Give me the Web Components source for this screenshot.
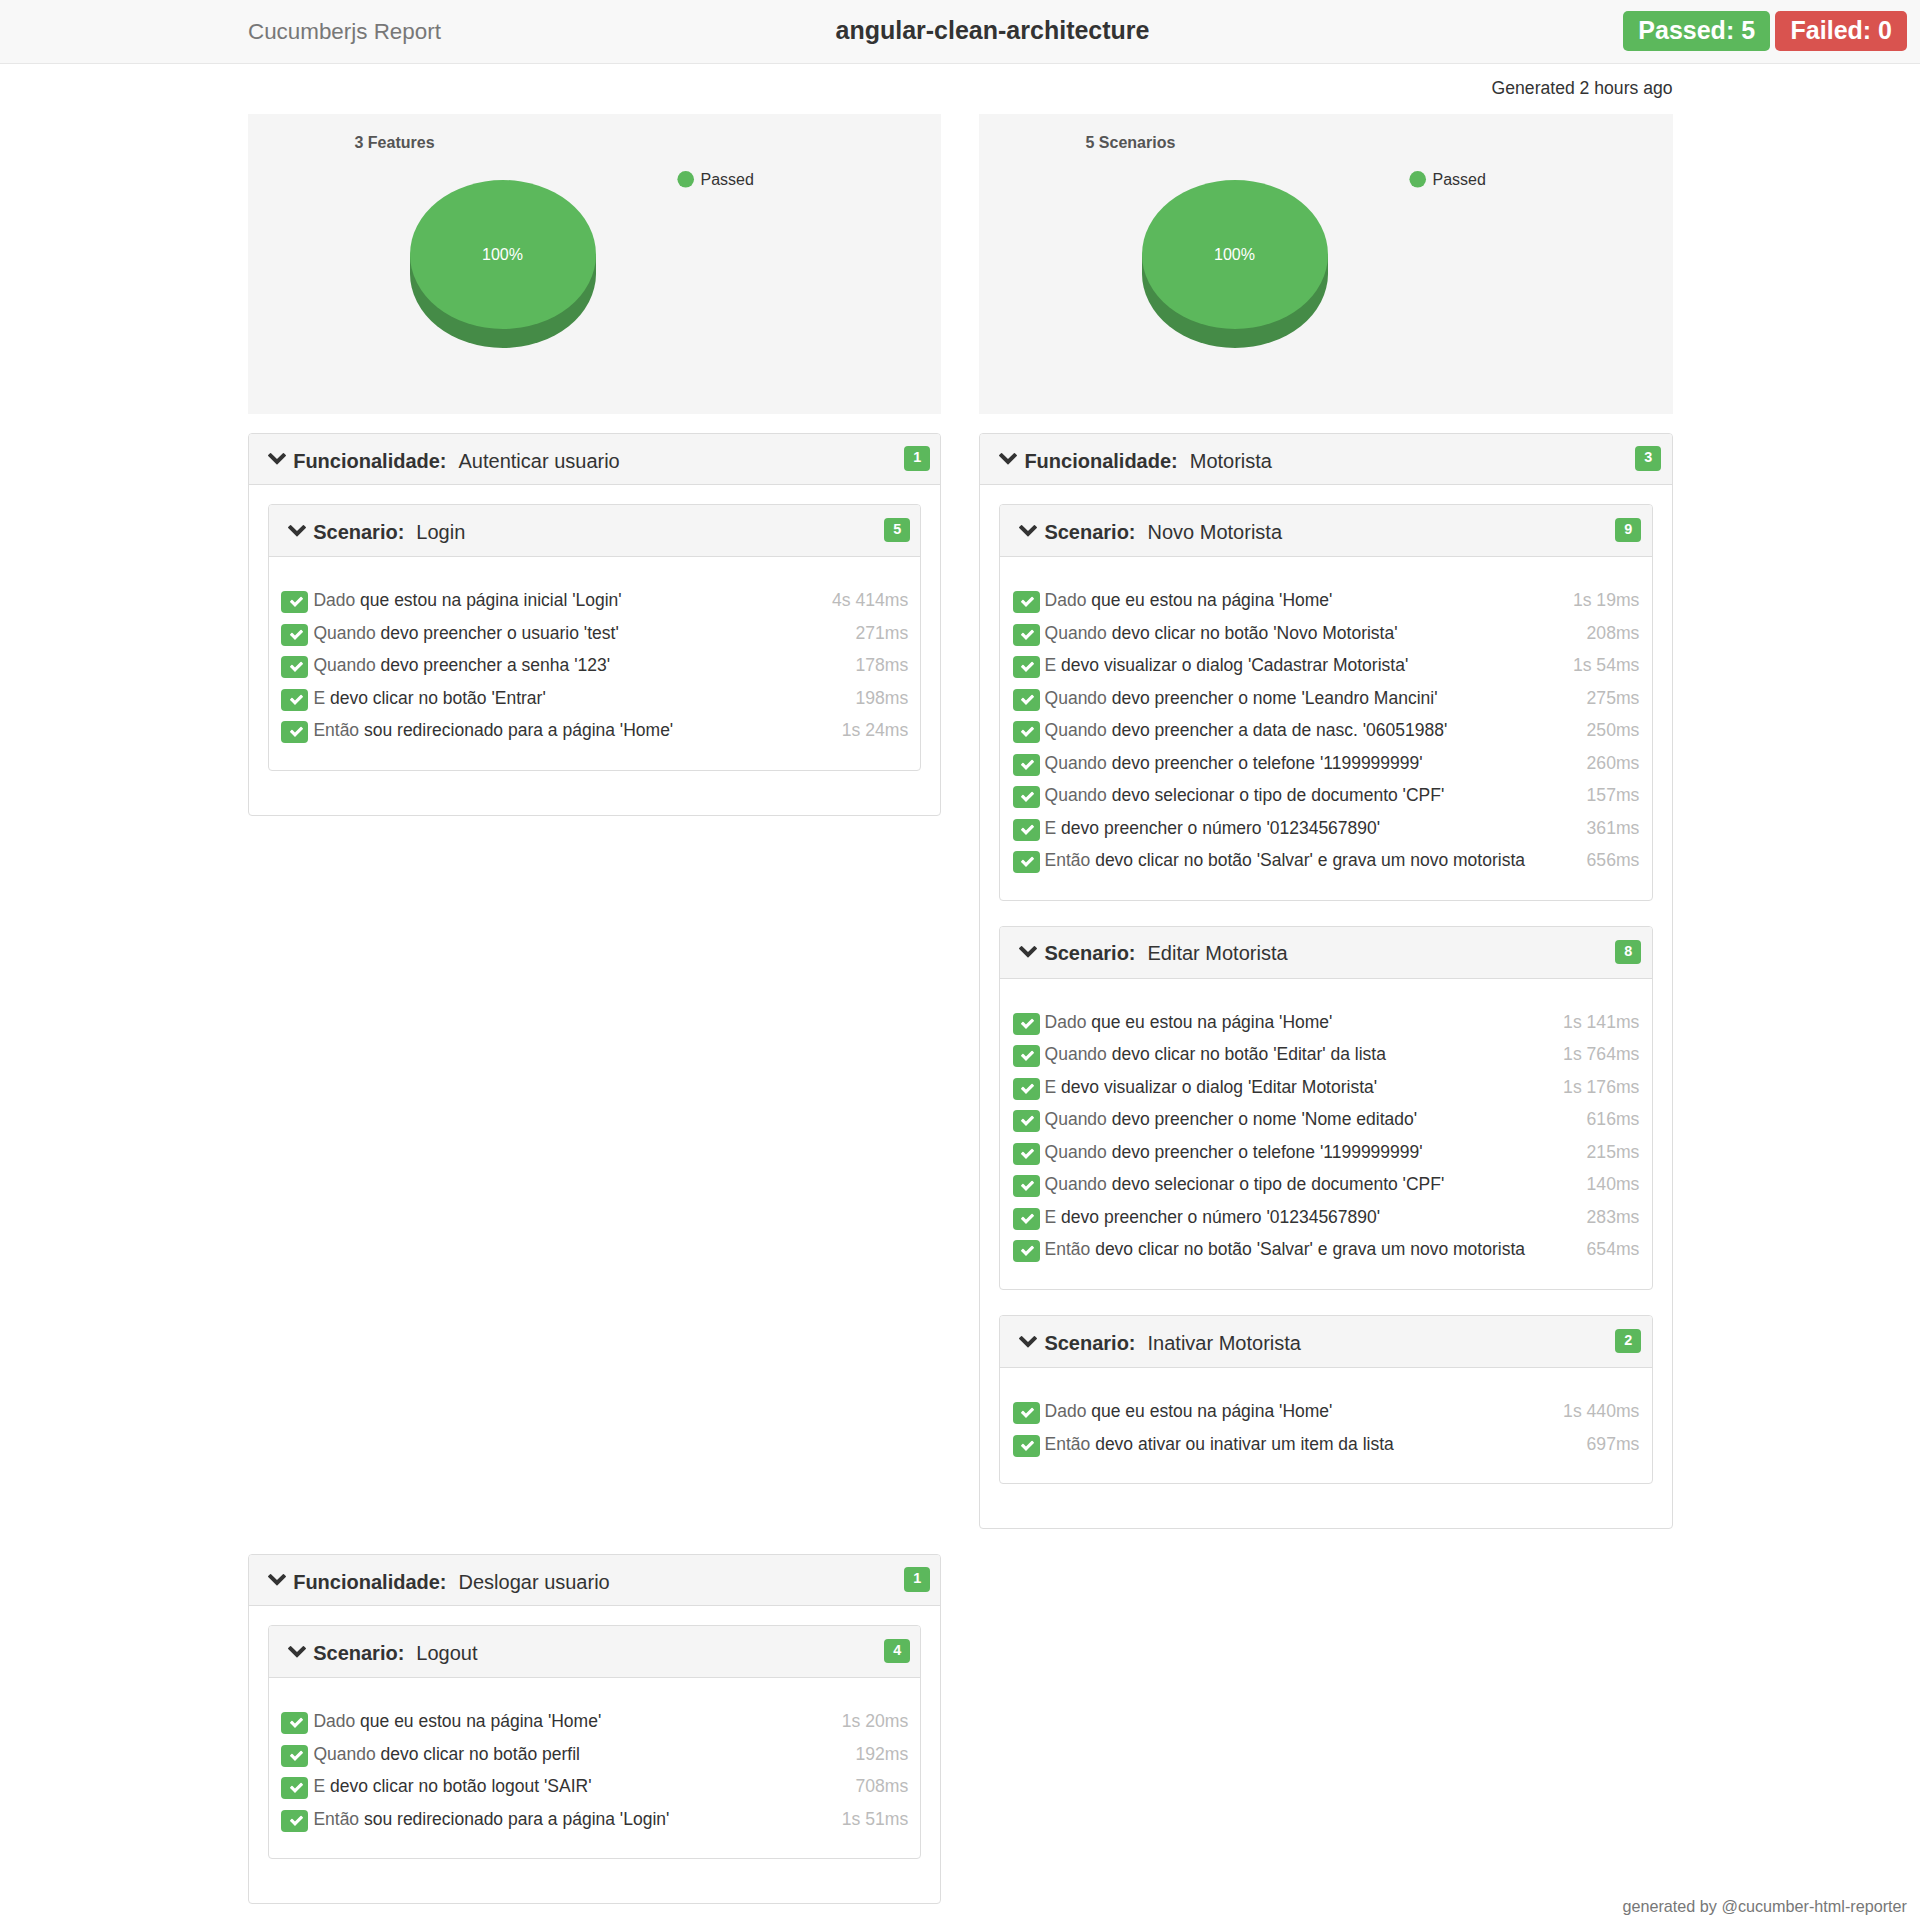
<!DOCTYPE html>
<html lang="pt">
<head>
<meta charset="utf-8">
<title>Cucumberjs Report</title>
<style>
    html, body { margin: 0; padding: 0; background: #fff; }
    body { font-family: "Liberation Sans", Arial, sans-serif; color: #333; position: relative; min-height: 1928px; }
    .page { width: 1424.4px; margin-left: 248.2px; display: grid; grid-template-columns: 693.2px 693.2px; column-gap: 38px; align-items: start; }
    .generated { grid-column: 1 / 3; height: 48px; padding-bottom: 2px; display: flex; justify-content: flex-end; align-items: center; font-size: 17.6px; }
    .charts { margin-bottom: 19px; }
    .feature { margin-bottom: 24.75px; }
</style>
</head>
<body>
<report-nav project="angular-clean-architecture" passed="5" failed="0"></report-nav>

<div class="page">
    <div class="generated">Generated 2 hours ago</div>
    <report-chart class="charts" label="3 Features"></report-chart>
    <report-chart class="charts" label="5 Scenarios" offset="1"></report-chart>

    <feature-panel class="feature" name="Autenticar usuario" count="1">
        <scenario-panel name="Login" count="5">
            <step-row key="Dado" text="que estou na página inicial 'Login'" time="4s 414ms"></step-row>
            <step-row key="Quando" text="devo preencher o usuario 'test'" time="271ms"></step-row>
            <step-row key="Quando" text="devo preencher a senha '123'" time="178ms"></step-row>
            <step-row key="E" text="devo clicar no botão 'Entrar'" time="198ms"></step-row>
            <step-row key="Então" text="sou redirecionado para a página 'Home'" time="1s 24ms"></step-row>
        </scenario-panel>
    </feature-panel>

    <feature-panel class="feature" name="Motorista" count="3">
        <scenario-panel name="Novo Motorista" count="9">
            <step-row key="Dado" text="que eu estou na página 'Home'" time="1s 19ms"></step-row>
            <step-row key="Quando" text="devo clicar no botão 'Novo Motorista'" time="208ms"></step-row>
            <step-row key="E" text="devo visualizar o dialog 'Cadastrar Motorista'" time="1s 54ms"></step-row>
            <step-row key="Quando" text="devo preencher o nome 'Leandro Mancini'" time="275ms"></step-row>
            <step-row key="Quando" text="devo preencher a data de nasc. '06051988'" time="250ms"></step-row>
            <step-row key="Quando" text="devo preencher o telefone '1199999999'" time="260ms"></step-row>
            <step-row key="Quando" text="devo selecionar o tipo de documento 'CPF'" time="157ms"></step-row>
            <step-row key="E" text="devo preencher o número '01234567890'" time="361ms"></step-row>
            <step-row key="Então" text="devo clicar no botão 'Salvar' e grava um novo motorista" time="656ms"></step-row>
        </scenario-panel>
        <scenario-panel name="Editar Motorista" count="8">
            <step-row key="Dado" text="que eu estou na página 'Home'" time="1s 141ms"></step-row>
            <step-row key="Quando" text="devo clicar no botão 'Editar' da lista" time="1s 764ms"></step-row>
            <step-row key="E" text="devo visualizar o dialog 'Editar Motorista'" time="1s 176ms"></step-row>
            <step-row key="Quando" text="devo preencher o nome 'Nome editado'" time="616ms"></step-row>
            <step-row key="Quando" text="devo preencher o telefone '1199999999'" time="215ms"></step-row>
            <step-row key="Quando" text="devo selecionar o tipo de documento 'CPF'" time="140ms"></step-row>
            <step-row key="E" text="devo preencher o número '01234567890'" time="283ms"></step-row>
            <step-row key="Então" text="devo clicar no botão 'Salvar' e grava um novo motorista" time="654ms"></step-row>
        </scenario-panel>
        <scenario-panel name="Inativar Motorista" count="2">
            <step-row key="Dado" text="que eu estou na página 'Home'" time="1s 440ms"></step-row>
            <step-row key="Então" text="devo ativar ou inativar um item da lista" time="697ms"></step-row>
        </scenario-panel>
    </feature-panel>

    <feature-panel class="feature" name="Deslogar usuario" count="1">
        <scenario-panel name="Logout" count="4">
            <step-row key="Dado" text="que eu estou na página 'Home'" time="1s 20ms"></step-row>
            <step-row key="Quando" text="devo clicar no botão perfil" time="192ms"></step-row>
            <step-row key="E" text="devo clicar no botão logout 'SAIR'" time="708ms"></step-row>
            <step-row key="Então" text="sou redirecionado para a página 'Login'" time="1s 51ms"></step-row>
        </scenario-panel>
    </feature-panel>
</div>

<report-footer>generated by @cucumber-html-reporter</report-footer>

<script>
const CHEVRON = 'M1683 808l-742 741q-19 19-45 19t-45-19l-742-741q-19-19-19-45.5t19-45.5l166-165q19-19 45-19t45 19l531 531 531-531q19-19 45-19t45 19l166 165q19 19 19 45.5t-19 45.5z';
const CHECK = 'M1671 566q0 40-28 68l-724 724-136 136q-28 28-68 28t-68-28l-136-136-362-362q-28-28-28-68t28-68l136-136q28-28 68-28t68 28l294 295 656-657q28-28 68-28t68 28l136 136q28 28 28 68z';

class ReportNav extends HTMLElement {
    connectedCallback() {
        let root = this.attachShadow({mode:'open'});
        root.innerHTML = `
            <style>
                :host { display: block; height: 63px; background: #f8f8f8; border-bottom: 1px solid #e7e7e7; }
                .bar { height: 63px; position: relative; display: flex; align-items: center; padding: 0 13px 0 248px; }
                .brand { font-size: 22.4px; color: #777; }
                .title { position: absolute; left: 0; right: 0; text-align: center; font-size: 25px; font-weight: bold; color: #333; padding-left: 65px; line-height: 63px; top: -1px; }
                .labels { margin-left: auto; display: flex; gap: 5px; position: relative; }
                .label { height: 40px; line-height: 39px; padding: 0 15px 0 15.5px; border-radius: 5px; color: #fff; font-size: 25px; font-weight: bold; margin-top: -1px; }
                .ok { background: #5cb85c; }
                .bad { background: #d9534f; }
            </style>
            <div class="bar">
                <span class="brand">Cucumberjs Report</span>
                <span class="title">${this.getAttribute('project')}</span>
                <div class="labels">
                    <span class="label ok">Passed: ${this.getAttribute('passed')}</span>
                    <span class="label bad">Failed: ${this.getAttribute('failed')}</span>
                </div>
            </div>`;
    }
}
customElements.define('report-nav', ReportNav);

class ReportChart extends HTMLElement {
    connectedCallback() {
        let root = this.attachShadow({mode:'open'});
        // the right chart sits one pixel further from its panel edge than the left one
        let off = Number(this.getAttribute('offset') || 0);
        root.innerHTML = `
            <style>
                :host { display: block; height: 300px; background: #f5f5f5; }
                svg { display: block; font-family: "Liberation Sans", Arial, sans-serif; }
            </style>
            <svg width="693" height="300" viewBox="0 0 693 300">
                <text x="106.5" y="34" font-size="16" font-weight="bold" fill="#555">${this.getAttribute('label')}</text>
                <g transform="translate(${off} 0)">
                    <path d="M162 140.500v19a93 74.500 0 0 0 186 0v-19z" fill="#458b47"/>
                    <ellipse cx="255" cy="140.500" rx="93" ry="74.500" fill="#5cb85c"/>
                    <text x="254.500" y="146" font-size="16" fill="#fff" text-anchor="middle">100%</text>
                    <circle cx="437.700" cy="65.300" r="8.300" fill="#5cb85c"/>
                    <text x="452.500" y="70.700" font-size="16" fill="#333">Passed</text>
                </g>
            </svg>`;
    }
}
customElements.define('report-chart', ReportChart);

class CountBadge extends HTMLElement {
    connectedCallback() {
        let root = this.attachShadow({mode:'open'});
        root.innerHTML = `
            <style>
                :host { display: block; width: 26px; height: var(--badge-height, 25px); background: #5cb85c; border-radius: 4px; color: #fff; font-size: 14.4px; font-weight: bold; text-align: center; line-height: 23px; }
            </style>
            <slot></slot>`;
    }
}
customElements.define('count-badge', CountBadge);

class FeaturePanel extends HTMLElement {
    connectedCallback() {
        let root = this.attachShadow({mode:'open'});
        root.innerHTML = `
            <style>
                :host { display: block; border: 1px solid #ddd; border-radius: 4px; background: #fff; }
                .head { height: 50px; background: #f5f5f5; border-bottom: 1px solid #ddd; border-radius: 3px 3px 0 0; display: flex; align-items: center; padding: 0 10.2px 0 18px; font-size: 20px; color: #333; }
                .head svg { width: 20px; height: 20px; margin-top: -4px; flex: none; }
                .head b { margin-left: 6px; padding-top: 4px; }
                .head span { margin-left: 12px; flex: 1; padding-top: 4px; }
                count-badge { margin-top: -1px; }
                .body { padding: 19px 19px 19px; }
            </style>
            <div class="head">
                <svg viewBox="0 0 1792 1792"><path fill="#333" d="${CHEVRON}"/></svg>
                <b>Funcionalidade:</b><span>${this.getAttribute('name')}</span>
                <count-badge>${this.getAttribute('count')}</count-badge>
            </div>
            <div class="body"><slot></slot></div>`;
    }
}
customElements.define('feature-panel', FeaturePanel);

class ScenarioPanel extends HTMLElement {
    connectedCallback() {
        let root = this.attachShadow({mode:'open'});
        root.innerHTML = `
            <style>
                :host { display: block; border: 1px solid #ddd; border-radius: 4px; background: #fff; margin-bottom: 25px; --badge-height: 24px; }
                .head { height: 51px; background: #f5f5f5; border-bottom: 1px solid #ddd; border-radius: 3px 3px 0 0; display: flex; align-items: center; padding: 0 10.2px 0 18px; font-size: 20px; color: #333; }
                .head svg { width: 20px; height: 20px; margin-top: -4px; flex: none; }
                .head b { margin-left: 6px; padding-top: 3px; }
                .head span { margin-left: 12px; flex: 1; padding-top: 3px; }
                count-badge { margin-top: -1px; }
                .body { padding: 27.25px 12.2px 23px; }
            </style>
            <div class="head">
                <svg viewBox="0 0 1792 1792"><path fill="#333" d="${CHEVRON}"/></svg>
                <b>Scenario:</b><span>${this.getAttribute('name')}</span>
                <count-badge>${this.getAttribute('count')}</count-badge>
            </div>
            <div class="body"><slot></slot></div>`;
    }
}
customElements.define('scenario-panel', ScenarioPanel);

class StepRow extends HTMLElement {
    connectedCallback() {
        let root = this.attachShadow({mode:'open'});
        root.innerHTML = `
            <style>
                :host { display: flex; align-items: center; height: 32.5px; font-size: 17.6px; color: #333; }
                .tick { width: 27px; height: 22px; background: #5cb85c; border-radius: 4px; display: flex; align-items: center; justify-content: center; margin-top: 3px; flex: none; }
                .tick svg { width: 15px; height: 15px; margin: -1px 0 0 3px; }
                .text { margin-left: 5px; flex: 1; font-size: 17.5px; }
                .key { color: #666; }
                .time { color: #bbb; }
            </style>
            <span class="tick"><svg viewBox="0 0 1792 1792"><path fill="#fff" d="${CHECK}"/></svg></span>
            <span class="text"><span class="key">${this.getAttribute('key')}</span> ${this.getAttribute('text')}</span>
            <span class="time">${this.getAttribute('time')}</span>`;
    }
}
customElements.define('step-row', StepRow);

class ReportFooter extends HTMLElement {
    connectedCallback() {
        let root = this.attachShadow({mode:'open'});
        root.innerHTML = `
            <style>
                :host { position: absolute; right: 13px; top: 1896px; font-size: 16.2px; line-height: 20px; color: #777; }
            </style>
            <slot></slot>`;
    }
}
customElements.define('report-footer', ReportFooter);
</script>
</body>
</html>
